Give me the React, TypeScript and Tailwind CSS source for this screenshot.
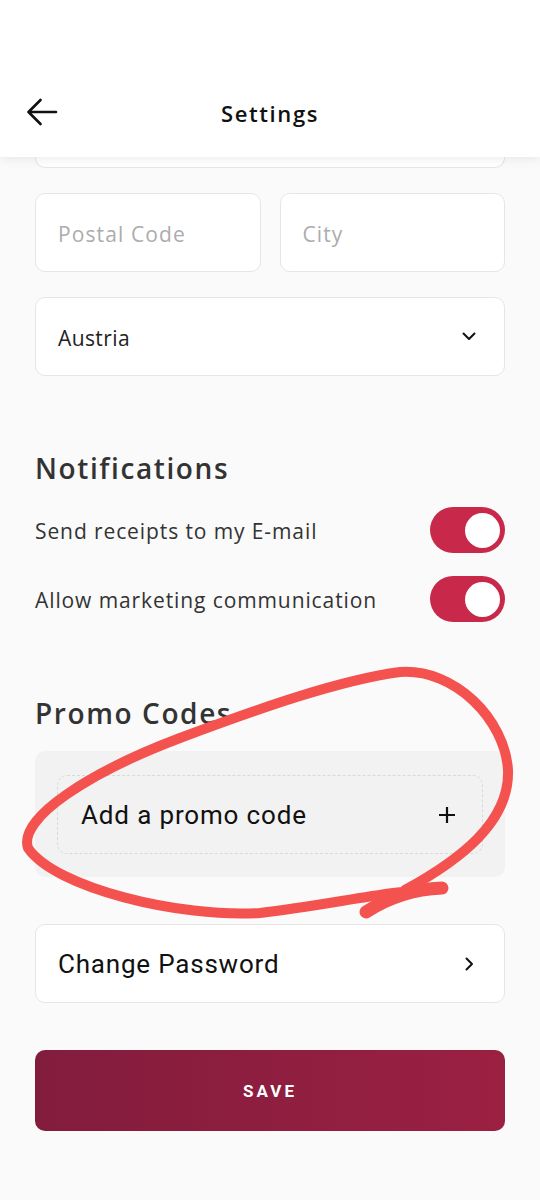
import React from "react";

function Toggle() {
  return (
    <div className="w-[75px] h-[46px] rounded-full bg-[#c8294a] flex items-center justify-end pr-[5px]">
      <div className="w-[35px] h-[35px] rounded-full bg-white" />
    </div>
  );
}

export default function App() {
  const geo = { fontFamily: "'Open Sans', 'Noto Sans', sans-serif" };
  const rob = { fontFamily: "Roboto, 'Liberation Sans', sans-serif" };
  return (
    <div className="relative w-[540px] h-[1200px] bg-[#fafafa] overflow-hidden">
      {/* Header */}
      <div className="relative z-10 h-[157px] bg-white shadow-[0_2px_10px_rgba(0,0,0,0.08)] flex flex-col justify-end">
        <div className="h-[90px] relative flex items-center justify-center">
          <svg className="absolute left-[25px] top-[30px]" width="34" height="30" viewBox="0 0 34 30" fill="none">
            <path d="M31 15H3.5M15.5 3L3.5 15L15.5 27" stroke="#111" strokeWidth="2.6" strokeLinecap="round" strokeLinejoin="round" />
          </svg>
          <span className="text-[22px] font-semibold text-[#111] tracking-[1.6px] pt-[2px]" style={geo}>Settings</span>
        </div>
      </div>

      {/* Content */}
      <div className="px-[35px] flex flex-col" style={geo}>
        <div className="h-[11px] bg-white border border-t-0 border-[#e6e6e6] rounded-b-[10px]" />

        <div className="mt-[25px] grid grid-cols-2 gap-[19px]">
          <div className="h-[79px] bg-white border border-[#e6e6e6] rounded-[10px] flex items-center px-[22px]">
            <span className="text-[21px] text-[#acacac] tracking-[1.1px] pt-[4px]">Postal Code</span>
          </div>
          <div className="h-[79px] bg-white border border-[#e6e6e6] rounded-[10px] flex items-center px-[22px]">
            <span className="text-[21px] text-[#acacac] tracking-[1.1px] pt-[4px]">City</span>
          </div>
        </div>

        <div className="mt-[25px] h-[79px] bg-white border border-[#e6e6e6] rounded-[10px] flex items-center justify-between pl-[22px] pr-[28px]">
          <span className="text-[21px] text-[#222] tracking-[0.4px] pt-[4px]">Austria</span>
          <svg width="14" height="9" viewBox="0 0 14 9" fill="none">
            <path d="M1.5 1.5L7 7L12.5 1.5" stroke="#111" strokeWidth="2" strokeLinecap="round" strokeLinejoin="round" />
          </svg>
        </div>

        <div className="mt-[74px] h-[35px] flex items-center">
          <span className="text-[28px] font-semibold text-[#333] leading-none tracking-[1.6px]">Notifications</span>
        </div>

        <div className="mt-[22px] h-[46px] flex items-center justify-between">
          <span className="text-[21px] text-[#333] tracking-[0.9px] pt-[4px]">Send receipts to my E-mail</span>
          <Toggle />
        </div>
        <div className="mt-[23px] h-[46px] flex items-center justify-between">
          <span className="text-[21px] text-[#333] tracking-[0.9px] pt-[4px]">Allow marketing communication</span>
          <Toggle />
        </div>

        <div className="mt-[73px] h-[35px] flex items-center">
          <span className="text-[28px] font-semibold text-[#333] leading-none tracking-[1.6px]">Promo Codes</span>
        </div>

        <div className="mt-[21px] bg-[#f2f2f2] rounded-[10px] pt-[24px] pb-[23px] px-[22px]">
          <div className="h-[79px] border border-dashed border-[#d9d9d9] rounded-[10px] flex items-center justify-between pl-[23px] pr-[26px]" style={rob}>
            <span className="text-[26px] text-[#111] tracking-[0.85px] pt-[2px]">Add a promo code</span>
            <svg width="18" height="18" viewBox="0 0 18 18" fill="none">
              <path d="M9 1V17M1 9H17" stroke="#111" strokeWidth="2.2" />
            </svg>
          </div>
        </div>

        <div className="mt-[47px] h-[79px] bg-white border border-[#e6e6e6] rounded-[10px] flex items-center justify-between pl-[22px] pr-[30px]" style={rob}>
          <span className="text-[26px] text-[#111] tracking-[0.8px] pt-[2px]">Change Password</span>
          <svg width="9" height="14" viewBox="0 0 9 14" fill="none">
            <path d="M1.5 1.5L7 7L1.5 12.5" stroke="#111" strokeWidth="2" strokeLinecap="round" strokeLinejoin="round" />
          </svg>
        </div>

        <div className="mt-[47px] h-[81px] rounded-[10px] bg-gradient-to-r from-[#821c3d] to-[#9b2042] flex items-center justify-center" style={rob}>
          <span className="text-[17px] font-bold text-white tracking-[0.18em] pt-[2px]">SAVE</span>
        </div>
      </div>

      {/* Hand-drawn annotation */}
      <svg className="absolute inset-0 pointer-events-none z-20" width="540" height="1200" viewBox="0 0 540 1200" fill="none">
        <path
          d="M440 889 C 390 890, 330 905, 260 913 C 180 918, 55 888, 28 848 C 18 818, 90 772, 180 738 C 260 708, 340 680, 400 672 C 455 668, 505 720, 508 770 C 510 822, 460 860, 405 890"
          stroke="#f4524f"
          strokeWidth="10"
          strokeLinecap="round"
          strokeLinejoin="round"
        />
        <path d="M442 888 C 420 889, 392 895, 366 912" stroke="#f4524f" strokeWidth="13" strokeLinecap="round" />
      </svg>
    </div>
  );
}
